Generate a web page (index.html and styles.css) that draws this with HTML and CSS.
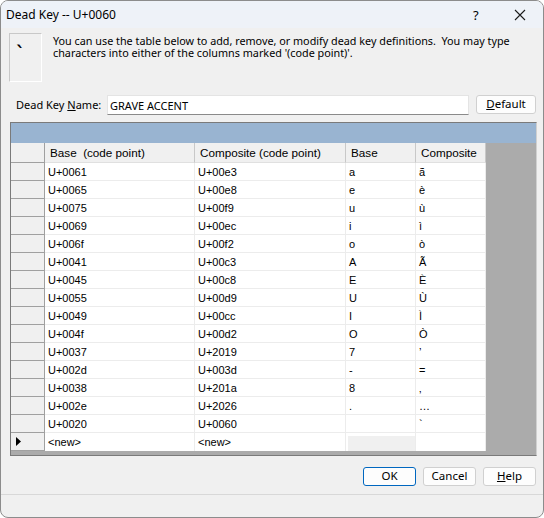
FILE: index.html
```html
<html>
<head>
<link rel="stylesheet" href="styles.css">
</head>
<body>
<div class="window">
  <div class="titlebar">
    <span class="title">Dead Key -- U+0060</span>
    <span class="help-btn">?</span>
    <span class="close-btn">
      <svg width="12" height="12" viewBox="0 0 12 12"><path d="M1 1 L11 11 M11 1 L1 11" stroke="#1b1b1b" stroke-width="1.1" fill="none"/></svg>
    </span>
  </div>

  <div class="intro">
    <div class="keybox">`</div>
    <p class="intro-text">You can use the table below to add, remove, or modify dead key definitions.&nbsp; You may type characters into either of the columns marked '(code point)'.</p>
  </div>

  <div class="name-row">
    <label class="name-label">Dead Key <u>N</u>ame:</label>
    <div class="name-input">GRAVE ACCENT</div>
    <div class="btn default-btn"><u>D</u>efault</div>
  </div>

  <div class="grid">
    <div class="grid-caption"></div>
    <div class="grid-body">
      <div class="row head">
        <div class="rh"></div>
        <div class="ch">Base&nbsp; (code point)</div>
        <div class="ch">Composite (code point)</div>
        <div class="ch">Base</div>
        <div class="ch">Composite</div>
      </div>
      <div class="row"><div class="rh"></div><div class="c">U+0061</div><div class="c">U+00e3</div><div class="c">a</div><div class="c">ã</div></div>
      <div class="row"><div class="rh"></div><div class="c">U+0065</div><div class="c">U+00e8</div><div class="c">e</div><div class="c">è</div></div>
      <div class="row"><div class="rh"></div><div class="c">U+0075</div><div class="c">U+00f9</div><div class="c">u</div><div class="c">ù</div></div>
      <div class="row"><div class="rh"></div><div class="c">U+0069</div><div class="c">U+00ec</div><div class="c">i</div><div class="c">ì</div></div>
      <div class="row"><div class="rh"></div><div class="c">U+006f</div><div class="c">U+00f2</div><div class="c">o</div><div class="c">ò</div></div>
      <div class="row"><div class="rh"></div><div class="c">U+0041</div><div class="c">U+00c3</div><div class="c">A</div><div class="c">Ã</div></div>
      <div class="row"><div class="rh"></div><div class="c">U+0045</div><div class="c">U+00c8</div><div class="c">E</div><div class="c">È</div></div>
      <div class="row"><div class="rh"></div><div class="c">U+0055</div><div class="c">U+00d9</div><div class="c">U</div><div class="c">Ù</div></div>
      <div class="row"><div class="rh"></div><div class="c">U+0049</div><div class="c">U+00cc</div><div class="c">I</div><div class="c">Ì</div></div>
      <div class="row"><div class="rh"></div><div class="c">U+004f</div><div class="c">U+00d2</div><div class="c">O</div><div class="c">Ò</div></div>
      <div class="row"><div class="rh"></div><div class="c">U+0037</div><div class="c">U+2019</div><div class="c">7</div><div class="c">’</div></div>
      <div class="row"><div class="rh"></div><div class="c">U+002d</div><div class="c">U+003d</div><div class="c">-</div><div class="c">=</div></div>
      <div class="row"><div class="rh"></div><div class="c">U+0038</div><div class="c">U+201a</div><div class="c">8</div><div class="c">‚</div></div>
      <div class="row"><div class="rh"></div><div class="c">U+002e</div><div class="c">U+2026</div><div class="c">.</div><div class="c">…</div></div>
      <div class="row"><div class="rh"></div><div class="c">U+0020</div><div class="c">U+0060</div><div class="c"></div><div class="c">`</div></div>
      <div class="row new-row">
        <div class="rh"><svg width="5" height="9" viewBox="0 0 5 9"><path d="M0 0 L5 4.5 L0 9 Z" fill="#000"/></svg></div>
        <div class="c">&lt;new&gt;</div><div class="c">&lt;new&gt;</div><div class="c"><span class="blank"></span></div><div class="c"></div>
      </div>
    </div>
  </div>

  <div class="buttons">
    <div class="btn ok-btn">OK</div>
    <div class="btn">Cancel</div>
    <div class="btn"><u>H</u>elp</div>
  </div>

  <div class="statusbar"></div>
</div>
</body>
</html>
```

FILE: styles.css
```css
body {
  margin: 0;
  background: #ffffff;
}

.window {
  box-sizing: border-box;
  width: 544px;
  height: 518px;
  border: 1px solid #8c8c8c;
  border-radius: 8px 8px 8px 8px;
  overflow: hidden;
  background: #f0f0f0;
  font-family: "Noto Sans", "Open Sans", sans-serif;
  color: #000;
  display: flex;
  flex-direction: column;
}

.titlebar {
  height: 27px;
  flex: none;
  background: #eef2f8;
  display: flex;
  align-items: center;
  font-size: 12px;
}
.title {
  padding-left: 5px;
  flex: 1;
}
.help-btn {
  width: 14px;
  margin-right: 27px;
  font-size: 13px;
}
.close-btn {
  width: 12px;
  height: 12px;
  margin-right: 17px;
  display: flex;
}

.intro {
  display: flex;
  padding: 5px 0 0 8px;
  height: 52px;
}
.keybox {
  box-sizing: border-box;
  width: 33px;
  height: 49px;
  border-top: 1px solid #c8c8c8;
  border-left: 1px solid #c8c8c8;
  border-right: 1px solid #ffffff;
  border-bottom: 1px solid #ffffff;
  font-family: "DejaVu Sans", sans-serif;
  font-weight: bold;
  font-size: 18px;
  line-height: 18px;
  padding: 10px 0 0 6px;
}
.intro-text {
  margin: 2px 0 0 11px;
  font-size: 10.8px;
  line-height: 12px;
  width: 470px;
}

.name-row {
  display: flex;
  align-items: center;
  padding: 10px 0 0 15px;
  height: 19px;
  font-size: 11px;
}
.name-label {
  width: 91px;
}
.name-input {
  box-sizing: border-box;
  width: 362px;
  height: 20px;
  background: #fff;
  border: 1px solid #e4e4e4;
  border-bottom-color: #8a8a8a;
  padding: 2px 0 0 2px;
  line-height: 15px;
}
.btn {
  box-sizing: border-box;
  width: 53px;
  height: 19px;
  border: 1px solid #d0d0d0;
  border-radius: 3px;
  background: #fdfdfd;
  font-size: 11.5px;
  text-align: center;
  line-height: 16px;
}
.default-btn {
  width: 60px;
  margin-left: 7px;
}

.grid {
  box-sizing: border-box;
  margin: 8px 0 0 9px;
  width: 527px;
  height: 334px;
  border: 1px solid #7a7a7a;
  border-right-color: #d0d0d0;
  background: #ababab;
  font-family: "Liberation Sans", Arial, sans-serif;
  font-size: 11px;
}
.grid-caption {
  height: 20px;
  background: #99b4d1;
}
.row {
  display: grid;
  grid-template-columns: 34px 150px 151px 70px 70px;
  height: 18px;
}
.row.head {
  height: 20px;
}
.rh {
  box-sizing: border-box;
  background: #f0f0f0;
  border-right: 1px solid #a0a0a0;
  border-bottom: 1px solid #a0a0a0;
  display: flex;
  align-items: center;
  padding-left: 5px;
}
.ch {
  box-sizing: border-box;
  background: #f0f0f0;
  border-right: 1px solid #c8c8c8;
  border-bottom: 1px solid #e0e0e0;
  padding: 3px 0 0 5px;
  font-size: 11.7px;
  white-space: pre;
}
.c {
  box-sizing: border-box;
  background: #ffffff;
  border-right: 1px solid #ececec;
  border-bottom: 1px solid #ececec;
  padding: 3px 0 0 3px;
  white-space: pre;
}
.new-row .c {
  border-bottom: none;
}
.blank {
  display: block;
  margin: 0 0 0 -1px;
  height: 15px;
  background: #f0f0f0;
}

.buttons {
  display: flex;
  justify-content: flex-end;
  gap: 7px;
  padding: 11px 7px 0 0;
  height: 20px;
}
.ok-btn {
  border-color: #0067c0;
}

.statusbar {
  margin-top: 7px;
  flex: 1;
  border-top: 1px solid #d8d8d8;
}
```
